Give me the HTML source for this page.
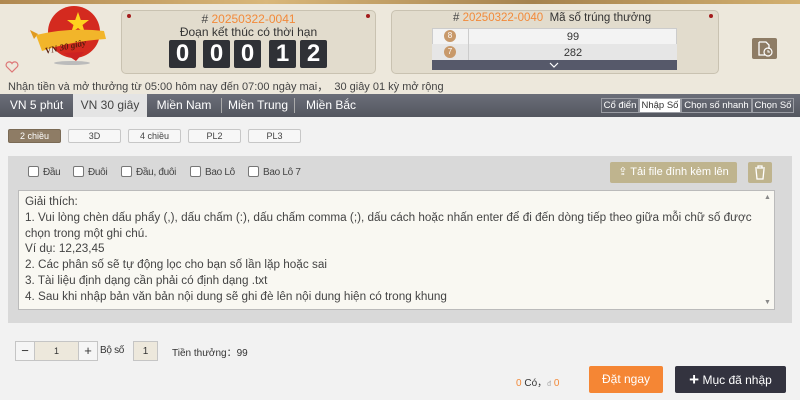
<!DOCTYPE html>
<html><head><meta charset="utf-8"><style>
*{box-sizing:border-box;margin:0;padding:0}
body{width:800px;height:400px;overflow:hidden;background:#f2f2f2;font-family:"Liberation Sans",sans-serif;position:relative;color:#333}
.abs{position:absolute}
.hdr{left:0;top:0;width:800px;height:94px;background:#ede8dc}
.top{left:0;top:0;width:800px;height:4px;background:linear-gradient(90deg,#b08850,#d9b77a,#a5824e,#d3b070)}
.box{background:#e2dccd;border:1px solid #c9c2b1;border-radius:5px}
.dot{width:4px;height:4px;border-radius:50%;background:#a31c1c}
.dig{width:27px;height:28px;background:#2f3136;color:#fff;font-size:24px;font-weight:bold;text-align:center;line-height:28px;border-radius:2px}
.nav{left:0;top:94px;width:800px;height:23px;background:linear-gradient(#6b6e79,#54575f)}
.tab{top:0;height:23px;line-height:23px;color:#fff;font-size:12px;text-align:center}
.sub{height:15px;line-height:13px;font-size:9.5px;border:1px solid #9a9ca3;color:#fff;top:4px;text-align:center;white-space:nowrap;overflow:hidden}
.btn{top:129px;height:14px;line-height:12px;font-size:9px;text-align:center;border:1px solid #c7c7c7;background:#f7f7f7;border-radius:2px;color:#444}
.cb{top:166px;font-size:10px;color:#444;line-height:12px;letter-spacing:-0.3px}
.cb i{display:inline-block;width:11px;height:11px;border:1px solid #777;border-radius:2px;vertical-align:-2px;margin-right:4px;background:#fff}
.ta{left:18px;top:190px;width:757px;height:120px;background:#f9f8f2;border:1px solid #bbb;overflow:hidden}
.ta div{position:absolute;left:6px;top:4px;font-size:11.5px;color:#444;line-height:15.8px;white-space:nowrap;transform:scaleX(1.02);transform-origin:0 0}
</style></head><body>
<div class="abs hdr"></div><div class="abs top"></div>
<svg class="abs" style="left:28px;top:5px" width="80" height="62" viewBox="0 0 80 62">
<ellipse cx="44" cy="58" rx="18" ry="2" fill="#bbb"/>
<circle cx="46" cy="27" r="26" fill="#d42a1f"/>
<path d="M36 48 L48 56 L56 47Z" fill="#c22"/>
<polygon points="50,7 52.8,15 61,15 54.5,20 57,28 50,23 43,28 45.5,20 39,15 47.2,15" fill="#ffd21e"/>
<path d="M2 25 L10 29 L6 34 Z" fill="#e09a20"/>
<path d="M8 30 Q42 22 76 26 L78 34 Q44 36 14 46 Z" fill="#f2b52a"/>
<text x="16" y="44" font-family="Liberation Serif" font-style="italic" font-weight="bold" font-size="9" fill="#5a1d0d" transform="rotate(-12 40 38)">VN 30 giây</text>
</svg>
<svg class="abs" style="left:5px;top:61px" width="14" height="12" viewBox="0 0 14 12"><path d="M7 11 L1.5 5.5 A3 3 0 0 1 7 2.5 A3 3 0 0 1 12.5 5.5Z" fill="none" stroke="#d77" stroke-width="1.2"/></svg>
<div class="abs box" style="left:121px;top:10px;width:255px;height:64px"></div>
<div class="abs dot" style="left:127px;top:14px"></div><div class="abs dot" style="left:366px;top:14px"></div>
<div class="abs" style="left:121px;top:13px;width:255px;text-align:center;font-size:12px;line-height:13px"><span style="color:#444">#</span> <span style="color:#f28a3a">20250322-0041</span><br>Đoạn kết thúc có thời hạn</div>
<div class="abs dig" style="left:169px;top:40px">0</div>
<div class="abs dig" style="left:203px;top:40px">0</div>
<div class="abs dig" style="left:234px;top:40px">0</div>
<div class="abs dig" style="left:269px;top:40px">1</div>
<div class="abs dig" style="left:300px;top:40px">2</div>
<div class="abs box" style="left:391px;top:10px;width:328px;height:64px"></div>
<div class="abs dot" style="left:709px;top:14px"></div>
<div class="abs" style="left:453px;top:12px;font-size:11.5px"><span style="color:#444">#</span> <span style="color:#f28a3a">20250322-0040</span>&nbsp; Mã số trúng thưởng</div>
<div class="abs" style="left:432px;top:28px;width:245px;height:42px;background:#f3f3f3;border:1px solid #ccc"></div>
<div class="abs" style="left:432px;top:44px;width:245px;height:16px;background:#e6e6e6"></div>
<div class="abs" style="left:468px;top:28px;width:1px;height:32px;background:#ccc"></div>
<div class="abs" style="left:432px;top:60px;width:245px;height:10px;background:#56596a"></div>
<svg class="abs" style="left:548px;top:61px" width="12" height="8"><path d="M2 2 L6 6 L10 2" stroke="#fff" fill="none" stroke-width="1.2"/></svg>
<div class="abs" style="left:444px;top:30px;width:12px;height:12px;border-radius:50%;background:#c8996a;color:#fff;font-size:8px;text-align:center;line-height:12px">8</div>
<div class="abs" style="left:444px;top:46px;width:12px;height:12px;border-radius:50%;background:#c8996a;color:#fff;font-size:8px;text-align:center;line-height:12px">7</div>
<div class="abs" style="left:469px;top:29px;width:208px;text-align:center;font-size:11px;line-height:16px">99<br>282</div>
<div class="abs" style="left:752px;top:38px;width:25px;height:21px;background:#8e7c65;border-radius:2px"></div>
<svg class="abs" style="left:755px;top:40px" width="20" height="18"><path d="M4 2h7l3 3v4M4 2v13h6" stroke="#fff" fill="none" stroke-width="1.3"/><circle cx="13" cy="12" r="4" stroke="#fff" fill="none" stroke-width="1.2"/><path d="M13 10v2h2" stroke="#fff" fill="none"/></svg>
<div class="abs" style="left:8px;top:78px;font-size:11px;color:#444">Nhận tiền và mở thưởng từ 05:00 hôm nay đến 07:00 ngày mai，&nbsp; 30 giây 01 kỳ mở rộng</div>
<div class="abs nav">
<div class="abs tab" style="left:0;width:73px">VN 5 phút</div>
<div class="abs tab" style="left:73px;width:74px;background:#e4e4e4;color:#444">VN 30 giây</div>
<div class="abs tab" style="left:147px;width:74px">Miền Nam</div>
<div class="abs" style="left:221px;top:4px;width:1px;height:15px;background:#aaa"></div>
<div class="abs tab" style="left:222px;width:72px">Miền Trung</div>
<div class="abs" style="left:294px;top:4px;width:1px;height:15px;background:#aaa"></div>
<div class="abs tab" style="left:295px;width:72px">Miền Bắc</div>
<div class="abs sub" style="left:601px;width:38px">Cổ điển</div>
<div class="abs sub" style="left:639px;width:42px;background:#fff;color:#333">Nhập Số</div>
<div class="abs sub" style="left:681px;width:71px">Chọn số nhanh</div>
<div class="abs sub" style="left:752px;width:42px">Chọn Số</div>
</div>
<div class="abs btn" style="left:8px;width:53px;background:#8e7c65;color:#fff;border-color:#7a6a55">2 chiều</div>
<div class="abs btn" style="left:68px;width:53px">3D</div>
<div class="abs btn" style="left:128px;width:53px">4 chiều</div>
<div class="abs btn" style="left:188px;width:53px">PL2</div>
<div class="abs btn" style="left:248px;width:53px">PL3</div>
<div class="abs" style="left:8px;top:156px;width:784px;height:167px;background:#d9d9d9"></div>
<div class="abs cb" style="left:28px"><i></i>Đầu</div>
<div class="abs cb" style="left:73px"><i></i>Đuôi</div>
<div class="abs cb" style="left:121px"><i></i>Đầu, đuôi</div>
<div class="abs cb" style="left:190px"><i></i>Bao Lô</div>
<div class="abs cb" style="left:248px"><i></i>Bao Lô 7</div>
<div class="abs" style="left:610px;top:162px;width:127px;height:21px;background:#bfb48e;color:#fff;font-size:11px;line-height:21px;text-align:center;border-radius:2px">⇪ Tải file đính kèm lên</div>
<div class="abs" style="left:748px;top:162px;width:24px;height:21px;background:#bfb48e;border-radius:2px"></div>
<svg class="abs" style="left:754px;top:165px" width="12" height="15"><path d="M1 3h10M4 3V1h4v2M2 4l1 10h6l1-10" stroke="#fff" fill="none" stroke-width="1.3"/></svg>
<div class="abs ta"><div>Giải thích:<br>1. Vui lòng chèn dấu phẩy (,), dấu chấm (:), dấu chấm comma (;), dấu cách hoặc nhấn enter để đi đến dòng tiếp theo giữa mỗi chữ số được<br>chọn trong một ghi chú.<br>Ví dụ: 12,23,45<br>2. Các phân số sẽ tự động lọc cho bạn số lần lặp hoặc sai<br>3. Tài liệu định dạng cần phải có định dạng .txt<br>4. Sau khi nhập bản văn bản nội dung sẽ ghi đè lên nội dung hiện có trong khung</div></div>
<div class="abs" style="left:764px;top:194px;font-size:7px;color:#888">▲</div>
<div class="abs" style="left:764px;top:299px;font-size:7px;color:#888">▼</div>
<div class="abs" style="left:15px;top:341px;width:20px;height:20px;background:#f5f5f5;border:1px solid #c5c5c5;text-align:center;line-height:18px;font-size:13px">−</div>
<div class="abs" style="left:78px;top:341px;width:20px;height:20px;background:#f5f5f5;border:1px solid #c5c5c5;text-align:center;line-height:18px;font-size:13px">+</div>
<div class="abs" style="left:35px;top:341px;width:43px;height:20px;background:#ede8dc;border-top:1px solid #c5c5c5;border-bottom:1px solid #c5c5c5;text-align:center;line-height:18px;font-size:9px">1</div>
<div class="abs" style="left:100px;top:345px;font-size:10px;letter-spacing:-0.3px">Bộ số</div>
<div class="abs" style="left:133px;top:341px;width:25px;height:20px;background:#ede8dc;border:1px solid #c5c5c5;text-align:center;line-height:20px;font-size:10px">1</div>
<div class="abs" style="left:172px;top:344px;font-size:10px">Tiền thưởng：99</div>
<div class="abs" style="left:516px;top:374px;font-size:10px"><span style="color:#f28a3a">0</span> Có，<span style="font-size:7px;color:#aaa">đ</span> <span style="color:#f28a3a">0</span></div>
<div class="abs" style="left:589px;top:366px;width:74px;height:27px;background:#f58634;color:#fff;font-size:12px;text-align:center;line-height:27px;border-radius:2px">Đặt ngay</div>
<div class="abs" style="left:675px;top:366px;width:111px;height:27px;background:#33333f;color:#fff;font-size:12px;text-align:center;line-height:27px;border-radius:2px"><b style="font-size:17px;vertical-align:-1px">+</b> Mục đã nhập</div>
</body></html>
